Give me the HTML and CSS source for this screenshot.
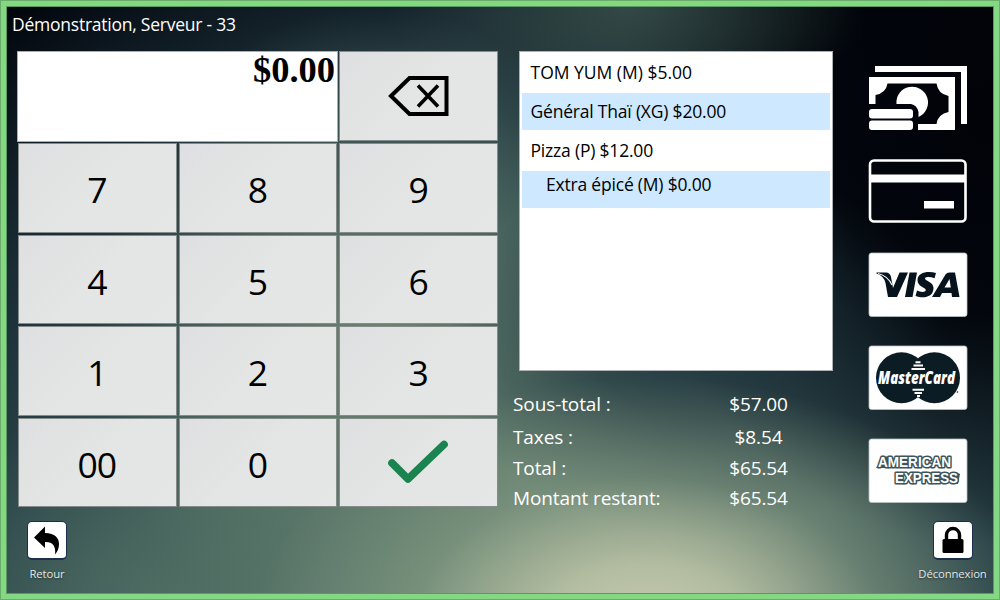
FILE: index.html
```html
<!DOCTYPE html>
<html lang="fr">
<head>
<meta charset="utf-8">
<title>Paiement</title>
<link rel="stylesheet" href="styles.css">
</head>
<body>
<div class="window">
  <div class="screen">
    <header class="title">Démonstration, Serveur - 33</header>
    <main class="content">
      <section class="pad">
        <div class="pad-top">
          <div class="display">$0.00</div>
          <button class="key key-back" aria-label="Effacer">
            <svg width="62" height="42" viewBox="0 0 62 42"><path d="M3 21L21.500 3H58.500V39H21.500Z" fill="none" stroke="#000" stroke-width="4"/><path d="M30 10.500L50 31.500M50 10.500L30 31.500" stroke="#000" stroke-width="3.600"/></svg>
          </button>
        </div>
        <div class="keys">
          <button class="key digit">7</button><button class="key digit">8</button><button class="key digit">9</button>
          <button class="key digit">4</button><button class="key digit">5</button><button class="key digit">6</button>
          <button class="key digit">1</button><button class="key digit">2</button><button class="key digit">3</button>
          <button class="key digit">00</button><button class="key digit">0</button>
          <button class="key" aria-label="Valider">
            <svg class="check" width="60" height="44" viewBox="0 0 60 44"><path d="M4 23L20 39L56 4.500" fill="none" stroke="#1a834f" stroke-width="7.600" stroke-linecap="round" stroke-linejoin="round"/></svg>
          </button>
        </div>
      </section>
      <section class="order">
        <ul class="items">
          <li class="item">TOM YUM (M) $5.00</li>
          <li class="item shaded">Général Thaï (XG) $20.00</li>
          <li class="item">Pizza (P) $12.00</li>
          <li class="item shaded extra">Extra épicé (M) $0.00</li>
        </ul>
        <dl class="totals">
          <dt>Sous-total :</dt><dd>$57.00</dd>
          <dt>Taxes :</dt><dd>$8.54</dd>
          <dt>Total :</dt><dd>$65.54</dd>
          <dt>Montant restant:</dt><dd>$65.54</dd>
        </dl>
      </section>
      <nav class="methods">
        <svg class="method" viewBox="0 0 100 66"><path fill="#fff" fill-rule="evenodd" d="M7 1H99V59H93V7H7ZM1 12H87V65H50V59H68.500Q70 49 80.500 47V31Q70 29 68.500 18.500H19.500Q18 28 7.500 30V39H1Z"/><path fill="#fff" d="M28.500 39A15.800 15.800 0 1 1 50.500 52V47Q49 40 43 39Z"/><rect x="1" y="44" width="44" height="9.500" rx="3" fill="#fff"/><rect x="1" y="55.500" width="44" height="9.500" rx="3" fill="#fff"/></svg>
        <svg class="method" viewBox="0 0 100 66"><rect x="2" y="2.500" width="95.500" height="61" rx="4" fill="none" stroke="#fff" stroke-width="2.600"/><path fill="#fff" d="M2 16.500H98V24.500H2ZM56 43H86V50.500H56Z"/></svg>
        <svg class="method" viewBox="0 0 100 66"><rect class="card" x="1" y="1" width="98" height="63.500" rx="2.500"/><path fill="#07131c" d="M8.500 20.500H18Q22 20.700 23 25L25 36L31.500 20.500H40L29 45H20L17.500 31Q16 24 8.500 21.500ZM41.500 20.500H49L44.500 45H37ZM91.500 45H84L83.500 41H74L72 45H64L77.500 22.500Q78.700 20.500 81.500 20.500H87ZM76.500 35.500H82.800L81.500 27Z"/><path d="M66.500 26.200Q63 24.900 59.500 25.100Q56.800 25.400 57 26.800C57.300 28.900 65.500 30 65.500 36C65.500 45.500 55 46.800 47.500 44L49 38.500C52 40 57 40.800 57.800 38.300C58.600 35.600 49.500 34.800 49.500 28.200C49.500 20.200 60 18.800 68 21Z" fill="#07131c"/><path d="M10 21.500Q20 24 24 33" fill="none" stroke="#fff" stroke-width="1.100"/></svg>
        <svg class="method" viewBox="0 0 100 66"><rect class="card" x="1" y="1" width="98" height="63.500" rx="2.500"/><circle cx="33.500" cy="32.700" r="25.500" fill="#0c1c25"/><circle cx="66.500" cy="32.700" r="25.500" fill="#0c1c25"/><path d="M50 14L56 23H44ZM44 44H56L50 53Z" fill="#0c1c25"/><path d="M47.500 17.300H52.500M45.500 20.500H55M43.500 24H57" stroke="#fff" stroke-width="2"/><path d="M44.500 44.800H56M46.500 48H54M49 51H52" stroke="#fff" stroke-width="2"/><text class="mc" x="10" y="38.800" textLength="77" lengthAdjust="spacingAndGlyphs">MasterCard</text><circle cx="89.500" cy="47" r=".8" fill="#0c1c25"/></svg>
        <svg class="method" viewBox="0 0 100 66"><rect class="card" x="1" y="1" width="98" height="63.500" rx="2.500"/><path d="M8 30L17 18.500H22L24 22V30H17ZM88 34L92 36L90 46H85Z" fill="#3e5559"/><text class="amex" x="10" y="29.300" textLength="73" lengthAdjust="spacingAndGlyphs">AMERICAN</text><text class="amex" x="27" y="45.200" textLength="63" lengthAdjust="spacingAndGlyphs">EXPRESS</text></svg>
      </nav>
    </main>
    <footer class="actions">
      <div class="action">
        <span class="tile"><svg width="28" height="30" viewBox="0 0 28 30"><path d="M1 12.500L12 1.500V8C22 8 26 13 26 19Q26 25 22 29.500Q23.500 16.500 12 17V23Z"/></svg></span>
        <span class="caption">Retour</span>
      </div>
      <div class="action">
        <span class="tile"><svg width="24" height="28" viewBox="0 0 24 28"><path d="M5.500 14V9A6.500 6.500 0 0 1 18.500 9V14" fill="none" stroke="#000" stroke-width="3.400"/><rect x="1.500" y="13" width="21" height="14" rx="1.500"/></svg></span>
        <span class="caption">Déconnexion</span>
      </div>
    </footer>
  </div>
</div>
</body>
</html>
```
FILE: styles.css
```css
* { box-sizing: border-box; }
body { margin: 0; font-family: "Open Sans", "Noto Sans", sans-serif; }
.window { width: 1000px; height: 600px; padding: 5px; border: 1px solid #6aac69; background: #84d783; }
.screen {
  height: 588px;
  border: 1px solid #5a9960;
  display: flex;
  flex-direction: column;
  background:
    radial-gradient(ellipse 390px 250px at 640px 620px, #c8cbb0 0%, rgba(186,194,165,.92) 25%, rgba(142,162,136,.5) 60%, rgba(110,135,115,0) 100%),
    radial-gradient(ellipse 250px 190px at 690px 340px, rgba(28,48,58,.75) 0%, rgba(28,48,58,.6) 40%, rgba(28,48,58,0) 100%),
    radial-gradient(ellipse 240px 120px at 620px 0, rgba(62,86,78,.75) 0%, rgba(50,72,70,0) 100%),
    radial-gradient(ellipse 280px 330px at 370px 330px, rgba(114,136,116,.9) 0%, rgba(91,119,105,.65) 45%, rgba(60,90,85,0) 100%),
    radial-gradient(ellipse 320px 200px at 160px 600px, rgba(82,112,100,.8) 0%, rgba(70,100,94,0) 100%),
    radial-gradient(ellipse 370px 430px at 980px 110px, #010309 0%, rgba(1,4,10,.95) 45%, rgba(4,12,20,0) 100%),
    radial-gradient(ellipse 760px 730px at 490px 640px, #6d8b78 0%, #587569 30%, #2c474c 62%, #1c2f38 80%, #02060d 108%);
}
.title { height: 44px; padding: 4px 5px; color: #fff; font-size: 17.500px; line-height: 27px; letter-spacing: -.24px; }
.content { height: 464px; display: flex; padding-left: 10px; }
.pad { width: 481px; }
.pad-top { display: flex; gap: 1px; height: 92px; }
.display { width: 321px; height: 91px; background: #fff; border: 1px solid #a8b0b4; text-align: right; font: bold 36.500px/36px "Liberation Serif", serif; padding-right: 2px; }
.key {
  display: flex; align-items: center; justify-content: center;
  min-width: 0; margin: 0; padding: 0 0 1px;
  border: 1px solid #858b89; border-radius: 0;
  background: linear-gradient(135deg, #dfdfe1, #e3e6e4 50%, #e5e6e6);
  color: #000; font: 400 35.500px/1 "Open Sans", sans-serif; letter-spacing: -1px;
}
.digit { padding: 4px 1px 0 0; }
.key-back { width: 159px; height: 90px; }
.check { margin: 1px 1px 0 0; }
.keys { height: 364px; padding-left: 1px; display: grid; grid-template-columns: repeat(3, 1fr); grid-template-rows: repeat(4, 1fr); gap: 2px; }
.order { width: 320px; margin-left: 15px; }
.items { list-style: none; width: 314px; height: 320px; margin: 0 0 0 6px; padding: 3px 2px; background: #fff; border: 1px solid #adb1b4; }
.item { height: 37px; margin-bottom: 2px; padding-left: 8.500px; font-size: 17.500px; line-height: 36px; letter-spacing: -.2px; white-space: nowrap; }
.item:first-child { height: 36px; line-height: 35px; letter-spacing: 0; }
.item.extra { padding-left: 24px; line-height: 26px; }
.items .shaded { background: #cde8ff; }
.totals { display: grid; grid-template-columns: 183px 125px; grid-template-rows: 33px 31px 30px 30px; margin: 17px 0 0; color: #fff; font-size: 19px; line-height: 33px; letter-spacing: -.1px; }
.totals dd { margin: 0; text-align: center; }
.methods { display: flex; flex-direction: column; gap: 27.300px; padding-top: 14px; margin-left: 35px; }
.method { display: block; width: 100px; height: 66px; }
.card { fill: #fff; stroke: #b8c1c3; stroke-width: .8; }
.mc { font: italic 800 17px "Open Sans", sans-serif; fill: #fff; }
.amex { font: bold 14px "Liberation Sans", sans-serif; fill: #fff; stroke: #3e5559; stroke-width: 3.200px; paint-order: stroke; stroke-linejoin: round; }
.actions { display: flex; justify-content: space-between; padding: 6px 0 0; }
.action { width: 80px; display: flex; flex-direction: column; align-items: center; }
.action:last-child { width: 81px; }
.tile { width: 40px; height: 39px; display: flex; align-items: center; justify-content: center; background: #fff; border: 1px solid #1b2f4c; border-bottom-width: 2px; border-radius: 5px; }
.caption { margin-top: 5px; color: #e3e8e6; font-size: 11.300px; line-height: 18px; letter-spacing: -.1px; text-shadow: 0 1px 2px #22343a; }
```
